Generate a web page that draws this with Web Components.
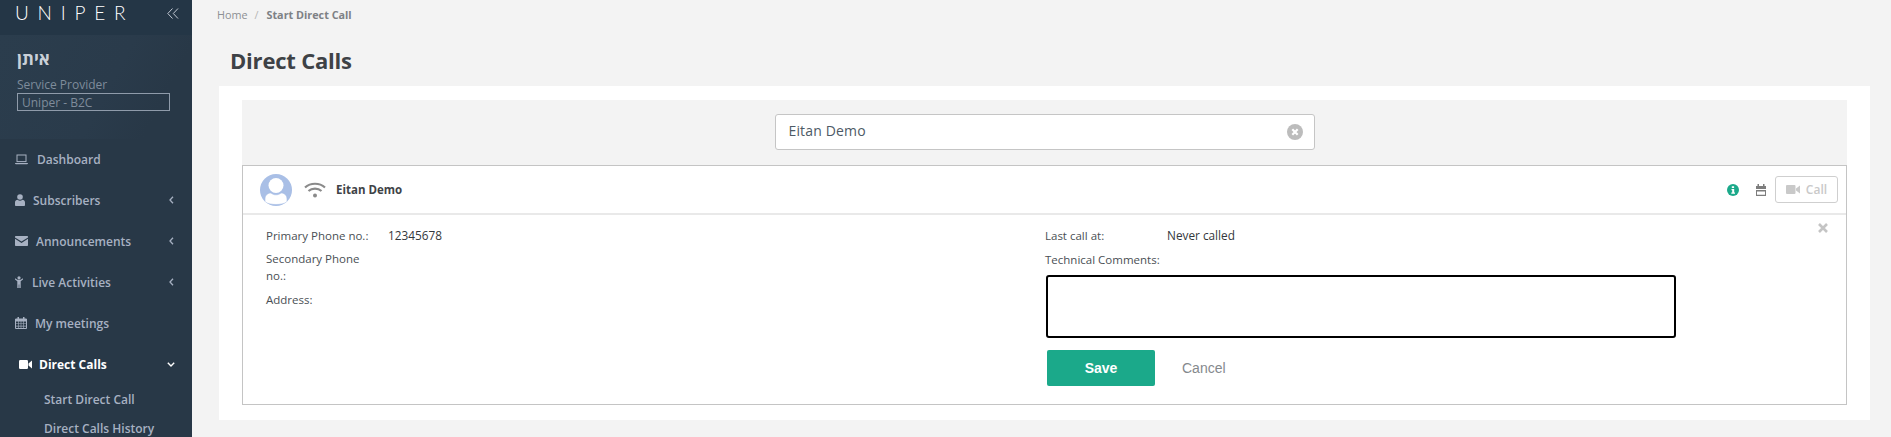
<!DOCTYPE html>
<html>
<head>
<meta charset="utf-8">
<title>Direct Calls</title>
<style>
    html, body { margin: 0; height: 437px; overflow: hidden; }
    body { font-family: 'Open Sans', 'Liberation Sans', sans-serif; font-size: 12px; color: #3e4448; background: #f3f3f3; }
    app-shell { height: 437px; }
</style>
</head>
<body>
<app-shell>
    <side-bar slot="side">
        <nav-item label="Dashboard" icon="laptop" gap="9"></nav-item>
        <nav-item label="Subscribers" icon="user" gap="8" arrow="left"></nav-item>
        <nav-item label="Announcements" icon="mail" gap="8" arrow="left"></nav-item>
        <nav-item label="Live Activities" icon="man" gap="9" arrow="left"></nav-item>
        <nav-item label="My meetings" icon="calendar" gap="8"></nav-item>
        <nav-item label="Direct Calls" icon="video" gap="7" arrow="down" active></nav-item>
        <sub-item>Start Direct Call</sub-item>
        <sub-item>Direct Calls History</sub-item>
    </side-bar>
    <bread-crumbs></bread-crumbs>
    <page-title>Direct Calls</page-title>
    <white-panel>
        <search-box value="Eitan Demo"></search-box>
        <contact-card name="Eitan Demo"></contact-card>
    </white-panel>
</app-shell>

<script>
const ICONS = {
    laptop: '<svg width="13" height="11" viewBox="0 0 13 11"><rect x="2" y="1" width="9" height="6.6" fill="none" stroke="currentColor" stroke-width="1"/><path d="M0 9h13v.4l-.8.8H.8L0 9.400z" fill="currentColor"/></svg>',
    user: '<svg width="10" height="12" viewBox="0 0 10 12"><circle cx="5" cy="3" r="2.800" fill="currentColor"/><path d="M0 11V8.500C0 6.800 1.300 5.800 2.600 5.800 3.300 6.400 4.100 6.700 5 6.700s1.700-.3 2.400-.9C8.700 5.800 10 6.800 10 8.500V11c0 .6-.5 1-1 1H1c-.5 0-1-.4-1-1z" fill="currentColor"/></svg>',
    mail: '<svg width="13" height="10" viewBox="0 0 13 10"><path d="M1 0h11c.6 0 1 .4 1 1v.4L6.500 5.600 0 1.400V1c0-.6.400-1 1-1z" fill="currentColor"/><path d="M0 2.800l6.500 4.200L13 2.800V9c0 .6-.4 1-1 1H1c-.6 0-1-.4-1-1z" fill="currentColor"/></svg>',
    man: '<svg width="8" height="12" viewBox="0 0 8 12"><circle cx="4" cy="1.800" r="1.600" fill="currentColor"/><path d="M0 2.200l2.500 1.500h3L8 2.200v1.300L5.700 5.300V12H4.300V8.500h-.6V12H2.300V5.300L0 3.500z" fill="currentColor"/></svg>',
    calendar: '<svg width="12" height="12" viewBox="0 0 12 12"><path d="M.5 2h11v9.500H.500z" fill="none" stroke="currentColor"/><path d="M0 2h12v2.500H0zM2.500 0h1.500v2.500H2.500zM8 0h1.500v2.500H8zM.5 6.500h11v.6H.5zM.5 8.800h11v.6H.5zM3.300 4.500h.6v7h-.6zM5.700 4.500h.6v7h-.6zM8.100 4.500h.6v7h-.6z" fill="currentColor"/></svg>',
    video: '<svg width="13" height="9" viewBox="0 0 13 9"><rect width="9" height="9" rx="1.200" fill="currentColor"/><path d="M9.500 3.500L13 .5v8L9.500 5.500z" fill="currentColor"/></svg>',
    chevLeft: '<svg width="5" height="8" viewBox="0 0 5 8"><path d="M4 .8L1 4l3 3.200" fill="none" stroke="currentColor" stroke-width="1.300"/></svg>',
    chevDown: '<svg width="8" height="5" viewBox="0 0 8 5"><path d="M.8 .8L4 4l3.200-3.200" fill="none" stroke="currentColor" stroke-width="1.400"/></svg>'
};

class AppShell extends HTMLElement {
    constructor() {
        super();
        this.attachShadow({ mode: 'open' });
    }

    connectedCallback() {
        this.shadowRoot.innerHTML = `
            <style>
                :host { display: flex; }
                main { flex: 1; min-width: 0; padding: 0 21px 0 27px; }
            </style>
            <slot name="side"></slot>
            <main><slot></slot></main>
        `;
    }
}

class SideBar extends HTMLElement {
    constructor() {
        super();
        this.attachShadow({ mode: 'open' });
    }

    connectedCallback() {
        this.shadowRoot.innerHTML = `
            <style>
                :host {
                    display: block;
                    width: 192px;
                    height: 437px;
                    overflow: hidden;
                    background: #283847;
                    color: #a7b1c2;
                    flex: none;
                }
                .brand {
                    height: 35px;
                    background: #243646;
                    display: flex;
                    justify-content: space-between;
                    align-items: center;
                    padding: 0 13px 9px 15px;
                    box-sizing: border-box;
                }
                .logo {
                    font-family: Lato, 'Open Sans', sans-serif;
                    font-weight: 300;
                    font-size: 19px;
                    letter-spacing: 8.800px;
                    line-height: 20px;
                    color: #fff;
                    white-space: nowrap;
                }
                .collapse { color: #c2c9d3; display: flex; }
                .profile {
                    height: 104px;
                    padding: 13px 22px 0 17px;
                    box-sizing: border-box;
                    background: linear-gradient(118deg, #2b3d4d 0%, #2a3b4b 55%, #283847 80%);
                }
                .name { font-size: 17px; line-height: 22px; font-weight: 700; color: #c9d0d8; }
                .role { margin-top: 6px; font-size: 12px; line-height: 17px; color: #7f8c9b; }
                .account {
                    height: 18px;
                    border: 1px solid #8f9baa;
                    padding-left: 4px;
                    font-size: 12px;
                    line-height: 17px;
                    color: #7f8c9b;
                    box-sizing: border-box;
                }
            </style>
            <div class="brand">
                <span class="logo">UNIPER</span>
                <span class="collapse">
                    <svg width="12" height="11" viewBox="0 0 12 11"><path d="M5.500 .5L.8 5.500l4.700 5M11 .5L6.300 5.500l4.700 5" fill="none" stroke="currentColor" stroke-width="1"/></svg>
                </span>
            </div>
            <div class="profile">
                <div class="name">איתן</div>
                <div class="role">Service Provider</div>
                <div class="account">Uniper - B2C</div>
            </div>
            <nav><slot></slot></nav>
        `;
    }
}

class NavItem extends HTMLElement {
    constructor() {
        super();
        this.attachShadow({ mode: 'open' });
    }

    connectedCallback() {
        const active = this.hasAttribute('active');
        const arrow = this.getAttribute('arrow');
        let arrowHtml = '';
        if (arrow === 'left') arrowHtml = ICONS.chevLeft;
        if (arrow === 'down') arrowHtml = ICONS.chevDown;
        this.shadowRoot.innerHTML = `
            <style>
                :host {
                    display: flex;
                    align-items: center;
                    height: 41.200px;
                    margin-top: -.2px;
                    padding: 0 ${active ? 17 : 18}px 0 ${active ? 19 : 15}px;
                    font-size: 12px;
                    font-weight: ${active ? 700 : 600};
                    color: ${active ? '#fff' : '#a7b1c2'};
                }
                .icon { display: flex; margin-right: ${this.getAttribute('gap')}px; }
                .label { flex: 1; white-space: nowrap; }
                .arrow { display: flex; }
            </style>
            <span class="icon">${ICONS[this.getAttribute('icon')]}</span>
            <span class="label">${this.getAttribute('label')}</span>
            <span class="arrow">${arrowHtml}</span>
        `;
    }
}

class SubItem extends HTMLElement {
    constructor() {
        super();
        this.attachShadow({ mode: 'open' });
    }

    connectedCallback() {
        this.shadowRoot.innerHTML = `
            <style>
                :host {
                    display: block;
                    padding-left: 44px;
                    font-size: 12px;
                    font-weight: 600;
                    line-height: 29px;
                    color: #a7b1c2;
                    white-space: nowrap;
                }
            </style>
            <slot></slot>
        `;
    }
}

class BreadCrumbs extends HTMLElement {
    constructor() {
        super();
        this.attachShadow({ mode: 'open' });
    }

    connectedCallback() {
        this.shadowRoot.innerHTML = `
            <style>
                :host {
                    display: flex;
                    height: 28px;
                    margin-left: -2px;
                    align-items: center;
                    font-size: 10.800px;
                    color: #8d9094;
                    white-space: nowrap;
                }
                .sep { margin: 0 8px 0 7px; color: #b5b5b5; }
                b { font-weight: 700; color: #7d8185; }
            </style>
            <span>Home</span><span class="sep">/</span><b>Start Direct Call</b>
        `;
    }
}

class PageTitle extends HTMLElement {
    constructor() {
        super();
        this.attachShadow({ mode: 'open' });
    }

    connectedCallback() {
        this.shadowRoot.innerHTML = `
            <style>
                :host {
                    display: block;
                    height: 58px;
                    padding: 17px 0 0 11px;
                    box-sizing: border-box;
                    font-size: 22px;
                    font-weight: 700;
                    letter-spacing: -.2px;
                    line-height: 30px;
                    color: #3e4246;
                }
            </style>
            <slot></slot>
        `;
    }
}

class WhitePanel extends HTMLElement {
    constructor() {
        super();
        this.attachShadow({ mode: 'open' });
    }

    connectedCallback() {
        this.shadowRoot.innerHTML = `
            <style>
                :host {
                    display: block;
                    background: #fff;
                    padding: 14px 23px 15px;
                    height: 334px;
                    box-sizing: border-box;
                }
            </style>
            <slot></slot>
        `;
    }
}

class SearchBox extends HTMLElement {
    constructor() {
        super();
        this.attachShadow({ mode: 'open' });
    }

    connectedCallback() {
        this.shadowRoot.innerHTML = `
            <style>
                :host {
                    display: flex;
                    justify-content: center;
                    background: #f3f3f3;
                    height: 65px;
                    padding-top: 14px;
                    box-sizing: border-box;
                }
                .field {
                    width: 540px;
                    height: 36px;
                    box-sizing: border-box;
                    background: #fff;
                    border: 1px solid #c5c5c5;
                    border-radius: 3px;
                    display: flex;
                    align-items: center;
                    justify-content: space-between;
                    padding: 0 11px 0 13px;
                    font-size: 14px;
                    color: #4d5a66;
                }
                .field span { position: relative; top: -2px; letter-spacing: .15px; }
                svg { display: block; }
            </style>
            <div class="field">
                <span>${this.getAttribute('value')}</span>
                <svg width="16" height="16" viewBox="0 0 16 16">
                    <circle cx="8" cy="8" r="8" fill="#bcbcbc"/>
                    <path d="M5.300 5.300l5.400 5.400M10.700 5.300l-5.400 5.400" stroke="#fff" stroke-width="2.200"/>
                </svg>
            </div>
        `;
    }
}

class ContactCard extends HTMLElement {
    constructor() {
        super();
        this.attachShadow({ mode: 'open' });
    }

    connectedCallback() {
        this.shadowRoot.innerHTML = `
            <style>
                :host {
                    display: block;
                    height: 240px;
                    box-sizing: border-box;
                    border: 1px solid #c4c4c4;
                    position: relative;
                }
                header {
                    height: 49px;
                    box-sizing: border-box;
                    border-bottom: 2px solid #e9e9e9;
                    display: flex;
                    align-items: center;
                    padding: 0 8px 0 17px;
                }
                .avatar { display: block; margin-right: 12px; }
                .wifi { display: block; margin-right: 10px; }
                .name { flex: 1; font-size: 11.500px; font-weight: 700; color: #3f4347; }
                .info { display: block; margin-right: 17px; }
                .cal { display: block; margin-right: 9px; }
                .call {
                    width: 63px;
                    height: 27px;
                    box-sizing: border-box;
                    border: 1px solid #cfcfcf;
                    border-radius: 3px;
                    display: flex;
                    align-items: center;
                    justify-content: center;
                    gap: 6px;
                    color: #c9c9c9;
                    font-size: 12px;
                    font-weight: 600;
                }
                .close { position: absolute; top: 57px; right: 18px; display: block; }
                .body {
                    display: grid;
                    grid-template-columns: 779px 1fr;
                    padding: 12px 0 0 23px;
                }
                .row { display: grid; grid-template-columns: 122px 1fr; margin-bottom: 7px; line-height: 17px; font-size: 11.500px; color: #4a4f54; }
                .row span:nth-child(2) { color: #33373b; font-size: 11.800px; }
                .row.narrow { line-height: 16.500px; }
                .row.narrow span:first-child { width: 100px; }
                .label { grid-column: 1 / -1; }
                .notes {
                    width: 630px;
                    height: 63px;
                    box-sizing: border-box;
                    border: 2px solid #000;
                    border-radius: 3px;
                    background: #fff;
                    margin-top: 4px;
                    margin-left: 1px;
                }
                .actions { display: flex; align-items: center; margin: 12px 0 0 2px; font-family: 'Liberation Sans', Arial, sans-serif; font-size: 14px; }
                .save {
                    width: 108px;
                    height: 36px;
                    background: #1ba98a;
                    border-radius: 2px;
                    color: #fff;
                    font-weight: 700;
                    display: flex;
                    align-items: center;
                    justify-content: center;
                }
                .cancel { margin-left: 27px; color: #85898d; }
            </style>
            <header>
                <svg class="avatar" width="32" height="32" viewBox="0 0 32 32">
                    <defs><clipPath id="c"><circle cx="16" cy="16" r="16"/></clipPath></defs>
                    <circle cx="16" cy="16" r="16" fill="#a9bfe6"/>
                    <g clip-path="url(#c)">
                        <circle cx="16" cy="11.500" r="7.500" fill="#fff"/>
                        <path d="M5 28v-3c0-3.500 2.500-6 6-6 1.300 1.200 3 1.800 5 1.800s3.700-.6 5-1.800c3.500 0 6 2.500 6 6v3c-3 1.800-7 2.500-11 2.500S8 29.800 5 28z" fill="#fff" stroke="#a9bfe6" stroke-width=".6"/>
                    </g>
                </svg>
                <svg class="wifi" width="22" height="16" viewBox="0 0 22 16">
                    <path d="M1 5.500C6.500 .5 15.500 .5 21 5.500" fill="none" stroke="#8a8a8a" stroke-width="2.200"/>
                    <path d="M4.500 9C8 5.800 14 5.800 17.500 9" fill="none" stroke="#8a8a8a" stroke-width="2.200"/>
                    <circle cx="11" cy="13.500" r="2" fill="#8a8a8a"/>
                </svg>
                <span class="name">${this.getAttribute('name')}</span>
                <svg class="info" width="12" height="12" viewBox="0 0 12 12">
                    <circle cx="6" cy="6" r="6" fill="#1ba98a"/>
                    <path d="M4.800 2.200h2.300v1.800H4.800zM4.500 5h2.700v3.500h.8v1.200H4.300V8.500h.9V6.200h-.7z" fill="#fff"/>
                </svg>
                <svg class="cal" width="10" height="12" viewBox="0 0 10 12">
                    <path d="M1.500 0h1.500v2H7V0h1.500v2H10v3H0V2h1.500zM0 6h10v6H0zM1 7.500V10.800h8V7.500z" fill="#7d7d7d" fill-rule="evenodd"/>
                </svg>
                <span class="call">
                    <svg width="14" height="9" viewBox="0 0 14 9"><rect width="9.500" height="9" rx="1" fill="#c9c9c9"/><path d="M10 3.500L14 .5v8L10 5.500z" fill="#c9c9c9"/></svg>
                    Call
                </span>
            </header>
            <svg class="close" width="10" height="10" viewBox="0 0 10 10">
                <path d="M1 1l8 8M9 1L1 9" stroke="#c4c4c4" stroke-width="2.600"/>
            </svg>
            <div class="body">
                <div class="left">
                    <div class="row"><span>Primary Phone no.:</span><span>12345678</span></div>
                    <div class="row narrow"><span>Secondary Phone no.:</span><span></span></div>
                    <div class="row"><span>Address:</span><span></span></div>
                </div>
                <div class="right">
                    <div class="row"><span>Last call at:</span><span>Never called</span></div>
                    <div class="row"><span class="label">Technical Comments:</span></div>
                    <div class="notes"></div>
                    <div class="actions">
                        <span class="save">Save</span>
                        <span class="cancel">Cancel</span>
                    </div>
                </div>
            </div>
        `;
    }
}

customElements.define('app-shell', AppShell);
customElements.define('side-bar', SideBar);
customElements.define('nav-item', NavItem);
customElements.define('sub-item', SubItem);
customElements.define('bread-crumbs', BreadCrumbs);
customElements.define('page-title', PageTitle);
customElements.define('white-panel', WhitePanel);
customElements.define('search-box', SearchBox);
customElements.define('contact-card', ContactCard);
</script>
</body>
</html>
